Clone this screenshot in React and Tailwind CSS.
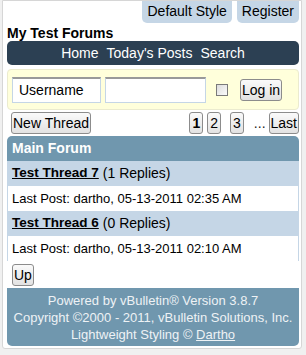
import React from 'react'

const font = "font-['Liberation_Sans',Arial,sans-serif]"

// Small grey 3D-ish button, used for paging and actions
function Btn({ children, bold, className = '' }) {
  return (
    <button
      className={`h-[22px] px-[1px] whitespace-nowrap leading-[20px] text-[14px] text-black border border-[#8c8c8c] rounded-[3px] bg-gradient-to-b from-[#fafafa] to-[#e2e2e2] ${bold ? 'font-bold' : ''} ${className}`}
    >
      {children}
    </button>
  )
}

function ThreadRow({ title, replies, lastPost }) {
  return (
    <>
      <div className="h-[25px] bg-[#c5d6e6] px-[5px] flex items-center text-[14px]">
        <a href="#" className="font-bold underline text-black text-[13.5px]">{title}</a>
        <span className="ml-[4px]">({replies} Replies)</span>
      </div>
      <div className="h-[25px] bg-white border-x border-[#c5d6e6] px-[4px] flex items-center text-[13px]">
        Last Post: {lastPost}
      </div>
    </>
  )
}

export default function App() {
  return (
    <div className={`h-screen bg-[#f0f0f0] pl-[2px] ${font} text-black`}>
      <div className="w-[300px] h-[349px] bg-white border border-[#d6d6d6] rounded-b-[3px] pl-[4px] pr-[2px]">
        {/* top links */}
        <div className="flex justify-end gap-[5px] text-[14px]">
          <div className="h-[22px] px-[5px] leading-[21px] bg-[#c5d6e6] rounded-b-[5px]">Default Style</div>
          <div className="h-[22px] px-[5px] leading-[21px] bg-[#c5d6e6] rounded-b-[5px]">Register</div>
        </div>

        <div className="h-[18px] pt-[1px] text-[14px] font-bold leading-[18px]">My Test Forums</div>

        <div className="h-[24px] bg-[#2c4053] rounded-[5px] flex items-center justify-center gap-[8px] text-white text-[14px]">
          <span>Home</span>
          <span>Today's Posts</span>
          <span>Search</span>
        </div>

        {/* login */}
        <div className="mt-[4px] h-[41px] bg-[#ffffdb] border border-[#ebebcf] rounded-[4px] flex items-center px-[4px]">
          <div className="w-[89px] h-[26px] border border-[#c5d6e6] border-t-2 border-t-[#999] bg-white px-[6px] flex items-center text-[14px]">
            Username
          </div>
          <div className="ml-[4px] w-[101px] h-[26px] border border-[#c5d6e6] border-t-2 border-t-[#999] bg-white"></div>
          <div className="ml-[10px] w-[12px] h-[12px] border border-[#7a7a7a] bg-gradient-to-br from-[#dcdcdc] to-[#fbfbfb]"></div>
          <Btn className="ml-[12px]">Log in</Btn>
        </div>

        {/* paging */}
        <div className="mt-[2px] h-[22px] flex items-center">
          <Btn className="ml-[4px]">New Thread</Btn>
          <div className="ml-auto flex items-center">
            <Btn bold className="h-[20px] leading-[18px] px-[2px]">1</Btn>
            <Btn className="ml-[4px] h-[20px] leading-[18px] px-[2px]">2</Btn>
            <Btn className="ml-[9px] h-[20px] leading-[18px] px-[2px]">3</Btn>
            <span className="ml-[10px] text-[14px] text-[#222]">...</span>
            <Btn className="ml-[3px]">Last</Btn>
          </div>
        </div>

        {/* forum */}
        <div className="mt-[2px]">
          <div className="h-[25px] bg-[#7097ae] rounded-t-[5px] px-[5px] flex items-center text-white font-bold text-[14px]">
            Main Forum
          </div>
          <ThreadRow title="Test Thread 7" replies="1" lastPost="dartho, 05-13-2011 02:35 AM" />
          <ThreadRow title="Test Thread 6" replies="0" lastPost="dartho, 05-13-2011 02:10 AM" />
        </div>

        <div className="mt-[3px] h-[22px] flex items-center">
          <Btn className="ml-[5px]">Up</Btn>
        </div>

        <div className="mt-[2px] h-[58px] bg-[#7097ae] rounded-b-[5px] flex flex-col items-center justify-center text-[13px] leading-[17px] text-[#eef2f5]">
          <div>Powered by vBulletin® Version 3.8.7</div>
          <div>Copyright ©2000 - 2011, vBulletin Solutions, Inc.</div>
          <div>
            Lightweight Styling © <a href="#" className="underline">Dartho</a>
          </div>
        </div>
      </div>
    </div>
  )
}
